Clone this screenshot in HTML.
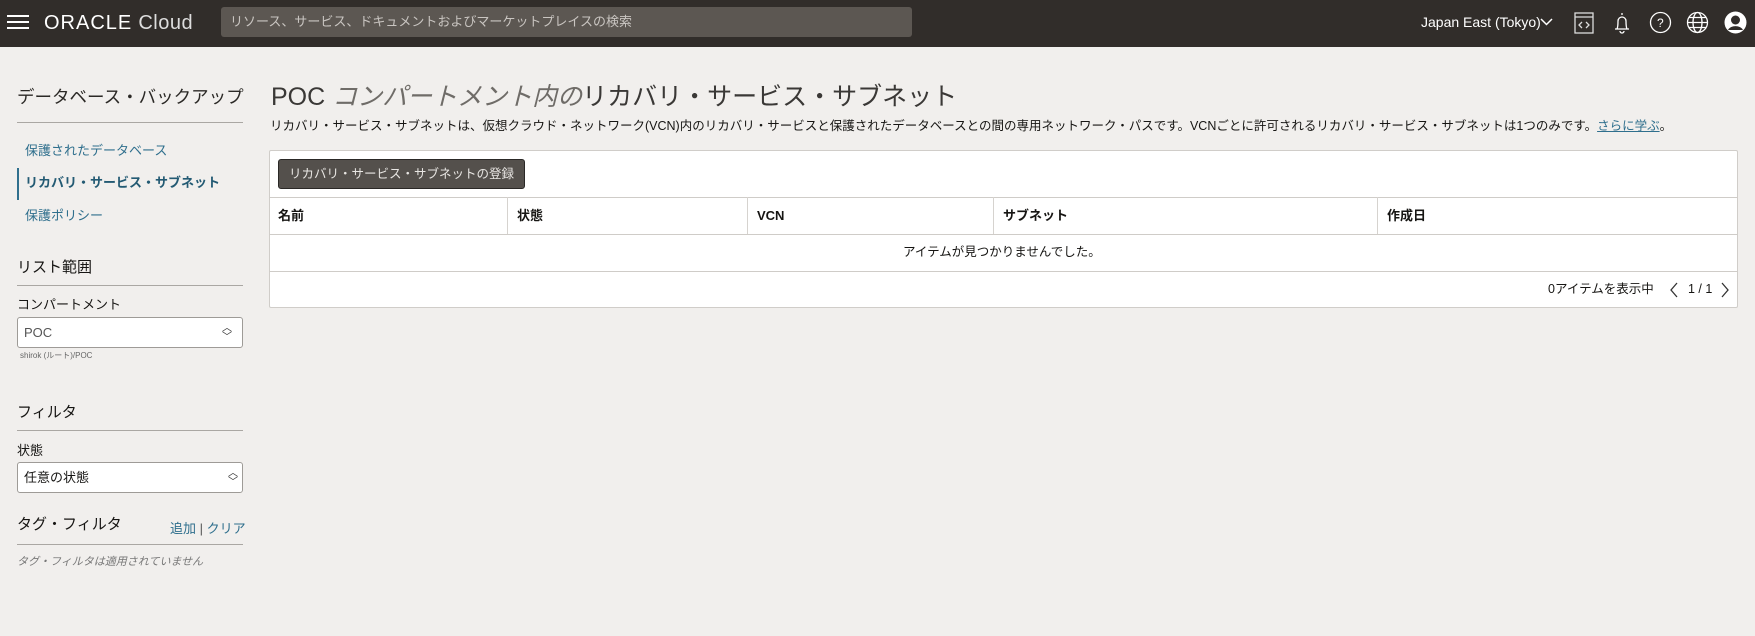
<!DOCTYPE html>
<html><head><meta charset="utf-8"><style>
*{box-sizing:border-box;margin:0;padding:0}
body{width:1755px;height:636px;overflow:hidden;background:#f1efed;font-family:"Liberation Sans","Noto Sans CJK JP",sans-serif;color:#161513;position:relative}
.a{position:absolute;white-space:nowrap;line-height:1.2}
.hdr{position:absolute;left:0;top:0;width:1755px;height:47px;background:#312d2a}
.line{position:absolute;height:1px;background:#aaa7a3}
.sel{position:absolute;background:#fff;border:1px solid #9e9b97;border-radius:3px;line-height:29px;padding:0 6px}
.th{position:absolute;top:197px;height:37px;border-right:1px solid #d6d3cf;font-size:13px;font-weight:bold;padding:0 9px;line-height:37px}
a{color:#2f6f8d}
</style></head><body>
<div class="hdr">
 <div class="a" style="left:7px;top:15px;width:22px;height:2px;background:#fff;box-shadow:0 6px 0 #fff,0 12px 0 #fff"></div>
 <div class="a" style="left:44px;top:11px;font-size:20px;color:#fff;letter-spacing:0.5px"><b style="font-weight:normal;letter-spacing:1px">ORACLE</b> <span style="color:#ddd">Cloud</span></div>
 <div class="a" style="left:221px;top:7px;width:691px;height:30px;background:#5c5752;border-radius:3px;color:#c9c5c1;font-size:13px;padding:0 9px;line-height:30px">リソース、サービス、ドキュメントおよびマーケットプレイスの検索</div>
 <div class="a" style="left:1421px;top:14px;color:#fff;font-size:14px">Japan East (Tokyo)</div>
 <svg class="a" style="left:1540px;top:17px" width="13" height="10"><path d="M1 2l5.5 5.5L12 2" stroke="#fff" stroke-width="1.5" fill="none"/></svg>
 <svg class="a" style="left:1573px;top:11px" width="22" height="24" fill="none" stroke="#ddd" stroke-width="1.3"><rect x="2" y="2" width="18" height="20"/><line x1="2" y1="6" x2="20" y2="6"/><path d="M9 11l-3 3 3 3M13 11l3 3-3 3"/></svg>
 <svg class="a" style="left:1612px;top:11px" width="20" height="24" fill="none" stroke="#fff" stroke-width="1.3"><path d="M10 2v2M5 18c1-2 1-5 1-8a4 4 0 0 1 8 0c0 3 0 6 1 8zM3 18h14M8 20a2 2 0 0 0 4 0"/></svg>
 <svg class="a" style="left:1649px;top:11px" width="23" height="23" fill="none" stroke="#fff" stroke-width="1.3"><circle cx="11.5" cy="11.5" r="10"/><text x="8" y="16" font-size="12" fill="#fff" stroke="none" font-family="Liberation Sans">?</text></svg>
 <svg class="a" style="left:1686px;top:11px" width="23" height="23" fill="none" stroke="#fff" stroke-width="1.3"><circle cx="11.5" cy="11.5" r="10"/><ellipse cx="11.5" cy="11.5" rx="4.5" ry="10"/><path d="M1.5 11.5h20M3 6.5h17M3 16.5h17"/></svg>
 <svg class="a" style="left:1724px;top:11px" width="23" height="23"><circle cx="11.5" cy="11.5" r="11" fill="#fff"/><circle cx="11.5" cy="9" r="4.5" fill="#312d2a"/><path d="M4 19a8 6 0 0 1 15 0" fill="#312d2a"/></svg>
</div>

<div class="a" style="left:17px;top:87px;font-size:17.5px;color:#2b2926">データベース・バックアップ</div>
<div class="line" style="left:17px;top:122px;width:226px"></div>
<div class="a" style="left:25px;top:143px;font-size:13px;color:#2f6f8d">保護されたデータベース</div>
<div class="a" style="left:17px;top:168px;width:2px;height:32px;background:#2f6f8d"></div>
<div class="a" style="left:25px;top:175px;font-size:13px;color:#235a73;font-weight:bold">リカバリ・サービス・サブネット</div>
<div class="a" style="left:25px;top:208px;font-size:13px;color:#2f6f8d">保護ポリシー</div>
<div class="a" style="left:17px;top:259px;font-size:15px">リスト範囲</div>
<div class="line" style="left:17px;top:285px;width:226px"></div>
<div class="a" style="left:17px;top:297px;font-size:13px">コンパートメント</div>
<div class="sel" style="left:17px;top:317px;width:226px;height:31px;font-size:13px;color:#555">POC<span style="position:absolute;right:10px;top:6px;font-size:10px;line-height:9px;color:#333">︿<br>﹀</span></div>
<div class="a" style="left:20px;top:351px;font-size:8px;color:#666">shirok (ルート)/POC</div>
<div class="a" style="left:17px;top:404px;font-size:15px">フィルタ</div>
<div class="line" style="left:17px;top:430px;width:226px"></div>
<div class="a" style="left:17px;top:443px;font-size:13px">状態</div>
<div class="sel" style="left:17px;top:462px;width:226px;height:31px;font-size:13px">任意の状態<span style="position:absolute;right:4px;top:6px;font-size:10px;line-height:9px;color:#333">︿<br>﹀</span></div>
<div class="a" style="left:17px;top:516px;font-size:15px">タグ・フィルタ</div>
<div class="a" style="left:170px;top:521px;font-size:13px;color:#555"><a>追加</a> | <a>クリア</a></div>
<div class="line" style="left:17px;top:544px;width:226px"></div>
<div class="a" style="left:17px;top:556px;font-size:11px;font-style:italic;color:#777">タグ・フィルタは適用されていません</div>

<div class="a" style="left:271px;top:82px;font-size:25px;color:#3a3836">POC <i style="color:#6f6c68">コンパートメント内の</i>リカバリ・サービス・サブネット</div>
<div class="a" style="left:270px;top:119px;font-size:12.5px">リカバリ・サービス・サブネットは、仮想クラウド・ネットワーク(VCN)内のリカバリ・サービスと保護されたデータベースとの間の専用ネットワーク・パスです。VCNごとに許可されるリカバリ・サービス・サブネットは1つのみです。<a style="text-decoration:underline">さらに学ぶ</a>。</div>
<div class="a" style="left:269px;top:150px;width:1469px;height:158px;background:#fff;border:1px solid #d0cdc9;border-radius:2px"></div>
<div class="a" style="left:278px;top:159px;width:247px;height:30px;background:#54504c;border:1px solid #2a2826;border-radius:3px;color:#e8e6e3;font-size:12.5px;padding:0 10px;line-height:28px">リカバリ・サービス・サブネットの登録</div>
<div class="line" style="left:269px;top:197px;width:1469px;background:#cfccc8"></div>
<div class="th" style="left:269px;width:239px">名前</div>
<div class="th" style="left:508px;width:240px">状態</div>
<div class="th" style="left:748px;width:246px">VCN</div>
<div class="th" style="left:994px;width:384px">サブネット</div>
<div class="th" style="left:1378px;width:360px;border-right:none">作成日</div>
<div class="line" style="left:269px;top:234px;width:1469px;background:#cfccc8"></div>
<div class="a" style="left:903px;top:245px;font-size:12.5px">アイテムが見つかりませんでした。</div>
<div class="line" style="left:269px;top:271px;width:1469px;background:#cfccc8"></div>
<div class="a" style="left:1548px;top:282px;font-size:12.5px">0アイテムを表示中</div>
<svg class="a" style="left:1669px;top:282px" width="10" height="16"><path d="M8 1L2 8l6 7" stroke="#333" fill="none" stroke-width="1.3"/></svg>
<div class="a" style="left:1688px;top:282px;font-size:12.5px">1 / 1</div>
<svg class="a" style="left:1720px;top:282px" width="10" height="16"><path d="M2 1l6 7-6 7" stroke="#333" fill="none" stroke-width="1.3"/></svg>
</body></html>
